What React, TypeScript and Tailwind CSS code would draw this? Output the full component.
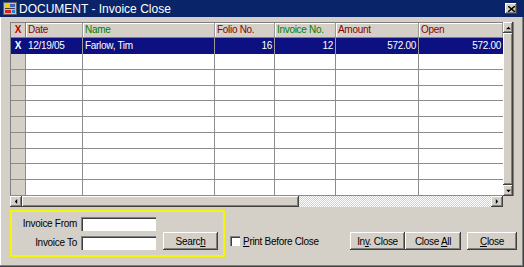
import React from 'react';

const cols = [
  { key: 'date', label: 'Date', w: 'w-[57px]', color: 'text-[#8b0000]', align: 'text-left' },
  { key: 'name', label: 'Name', w: 'w-[132px]', color: 'text-[#008000]', align: 'text-left' },
  { key: 'folio', label: 'Folio No.', w: 'w-[60px]', color: 'text-[#8b0000]', align: 'text-right' },
  { key: 'inv', label: 'Invoice No.', w: 'w-[61px]', color: 'text-[#008000]', align: 'text-right' },
  { key: 'amount', label: 'Amount', w: 'w-[83px]', color: 'text-[#8b0000]', align: 'text-right' },
  { key: 'open', label: 'Open', w: 'w-[84px]', color: 'text-[#8b0000]', align: 'text-right' },
];

const rowData: Record<string, string> = {
  date: '12/19/05',
  name: 'Farlow, Tim',
  folio: '16',
  inv: '12',
  amount: '572.00',
  open: '572.00',
};

const raised =
  'bg-[#d4d0c8] shadow-[inset_-1px_-1px_#404040,inset_1px_1px_#ffffff,inset_-2px_-2px_#808080]';
const sunken =
  'bg-white shadow-[inset_1px_1px_#808080,inset_2px_2px_#404040,inset_-1px_-1px_#ffffff]';

const Arrow = ({ dir }: { dir: 'up' | 'down' | 'left' | 'right' }) => {
  const pts = {
    up: '1,4 4,1 7,4',
    down: '1,1 4,4 7,1',
    left: '4,1 1,4 4,7',
    right: '1,1 4,4 1,7',
  }[dir];
  const vb = dir === 'up' || dir === 'down' ? '0 0 8 5' : '0 0 5 8';
  return (
    <svg viewBox={vb} className={dir === 'up' || dir === 'down' ? 'w-[7px] h-[4px]' : 'w-[4px] h-[7px]'}>
      <polygon points={pts} fill="#000" />
    </svg>
  );
};

const Btn = ({ w, children }: { w: string; children: React.ReactNode }) => (
  <div className={`${raised} ${w} h-[18px] flex items-center justify-center text-black`}>
    {children}
  </div>
);

export default function App() {
  const emptyRows = Array.from({ length: 9 });
  return (
    <div
      className="w-[524px] h-[267px] bg-[#d4d0c8] flex flex-col overflow-hidden text-[10px] tracking-[-0.3px] shadow-[inset_-1px_-1px_#404040,inset_-2px_-2px_#808080,inset_1px_0_#ffffff]"
      style={{ fontFamily: '"Liberation Sans", Arial, sans-serif' }}
    >
      {/* Title bar */}
      <div className="h-[17px] bg-[#0a246a] flex items-center pl-[3px] pr-[5px]">
        <svg viewBox="0 0 14 13" className="w-[14px] h-[13px]">
          <rect x="0.5" y="0.5" width="13" height="12" fill="#c0c0c0" stroke="#606060" />
          <rect x="2" y="2" width="4" height="3" fill="#f0d000" />
          <rect x="7" y="2" width="5" height="3" fill="#4060c0" />
          <rect x="2" y="6" width="10" height="1" fill="#404040" />
          <rect x="2" y="8" width="6" height="3" fill="#e02020" />
          <rect x="9" y="8" width="3" height="3" fill="#2080e0" />
        </svg>
        <span className="ml-[2px] text-white text-[12px] tracking-normal leading-none">DOCUMENT - Invoice Close</span>
        <div className={`${raised} ml-auto mr-[2px] w-[12px] h-[11px] flex items-center justify-center`}>
          <svg viewBox="0 0 7 6" className="w-[7px] h-[6px]">
            <path d="M0 0L7 6M7 0L0 6" stroke="#000" strokeWidth="1.4" />
          </svg>
        </div>
      </div>

      <div className="pl-[10px] pt-[5px]">
        {/* Grid */}
        <div className="flex w-[504px] h-[174px]">
          <div className="w-[493px] flex flex-col border-l border-t border-[#808080] overflow-hidden">
            {/* Header */}
            <div className="flex h-[15px] shrink-0 bg-[#d4d0c8] leading-[14px] border-b border-[#808080]">
              <div className="w-[15px] border-r border-[#808080] text-center font-bold text-[#c00000]">X</div>
              {cols.map(c => (
                <div key={c.key} className={`${c.w} ${c.color} pl-[2px] border-r border-[#9a9a9a] shadow-[inset_1px_1px_#ffffff] text-left`}>
                  {c.label}
                </div>
              ))}
            </div>
            {/* Body */}
            <div className="flex flex-col flex-1">
              <div className="flex h-[16px] bg-[#0c1080] text-white leading-[15px]">
                <div className="w-[15px] text-center font-bold border-r border-[#0c1080]">X</div>
                {cols.map(c => (
                  <div key={c.key} className={`${c.w} ${c.align} px-[2px] border-r border-[#9a9a9a] last:border-r-0`}>
                    {rowData[c.key]}
                  </div>
                ))}
              </div>
              {emptyRows.map((_, i) => (
                <div key={i} className="flex flex-1 border-b border-[#8c8c8c]">
                  <div className="w-[15px] bg-[#d4d0c8] border-r border-[#8c8c8c]" />
                  {cols.map(c => (
                    <div key={c.key} className={`${c.w} bg-white border-r border-[#8c8c8c] last:border-r-0`} />
                  ))}
                </div>
              ))}
            </div>
          </div>
          {/* Vertical scrollbar */}
          <div className="w-[11px] flex flex-col bg-[#d4d0c8] border-r border-[#808080]">
            <div className={`${raised} h-[11px] flex items-center justify-center`}>
              <Arrow dir="up" />
            </div>
            <div className={`${raised} flex-1`} />
            <div className={`${raised} h-[11px] flex items-center justify-center`}>
              <Arrow dir="down" />
            </div>
          </div>
        </div>

        {/* Horizontal scrollbar */}
        <div className="flex w-[493px] h-[11px]">
          <div className={`${raised} w-[12px] flex items-center justify-center`}>
            <Arrow dir="left" />
          </div>
          <div className={`${raised} w-[277px]`} />
          <div className="flex-1 bg-[repeating-conic-gradient(#ffffff_0_25%,#d4d0c8_0_50%)] bg-[length:2px_2px]" />
          <div className={`${raised} w-[12px] flex items-center justify-center`}>
            <Arrow dir="right" />
          </div>
        </div>

        {/* Bottom controls */}
        <div className="flex mt-[3px] text-black">
          <div className="w-[215px] h-[47px] border-2 border-[#f5f50a] flex items-end pb-[5px]">
            <div className="flex flex-col gap-[4px]">
              <div className="flex items-center">
                <span className="w-[65px] text-right">Invoice From</span>
                <div className={`${sunken} ml-[4px] w-[75px] h-[14px]`} />
              </div>
              <div className="flex items-center">
                <span className="w-[65px] text-right">Invoice To</span>
                <div className={`${sunken} ml-[4px] w-[75px] h-[14px]`} />
              </div>
            </div>
            <div className="ml-[7px]">
              <Btn w="w-[55px]">
                <span>Searc<u>h</u></span>
              </Btn>
            </div>
          </div>

          <div className="flex items-center h-[18px] mt-[22px] flex-1 pr-[7px]">
            <div className={`${sunken} ml-[5px] w-[10px] h-[10px]`} />
            <span className="ml-[3px]"><u>P</u>rint Before Close</span>
            <div className="ml-auto flex">
              <Btn w="w-[55px]">
                <span>In<u>v</u>. Close</span>
              </Btn>
              <Btn w="w-[56px]">
                <span>Close <u>A</u>ll</span>
              </Btn>
              <div className="ml-[6px]">
                <Btn w="w-[50px]">
                  <span><u>C</u>lose</span>
                </Btn>
              </div>
            </div>
          </div>
        </div>
      </div>
    </div>
  );
}
